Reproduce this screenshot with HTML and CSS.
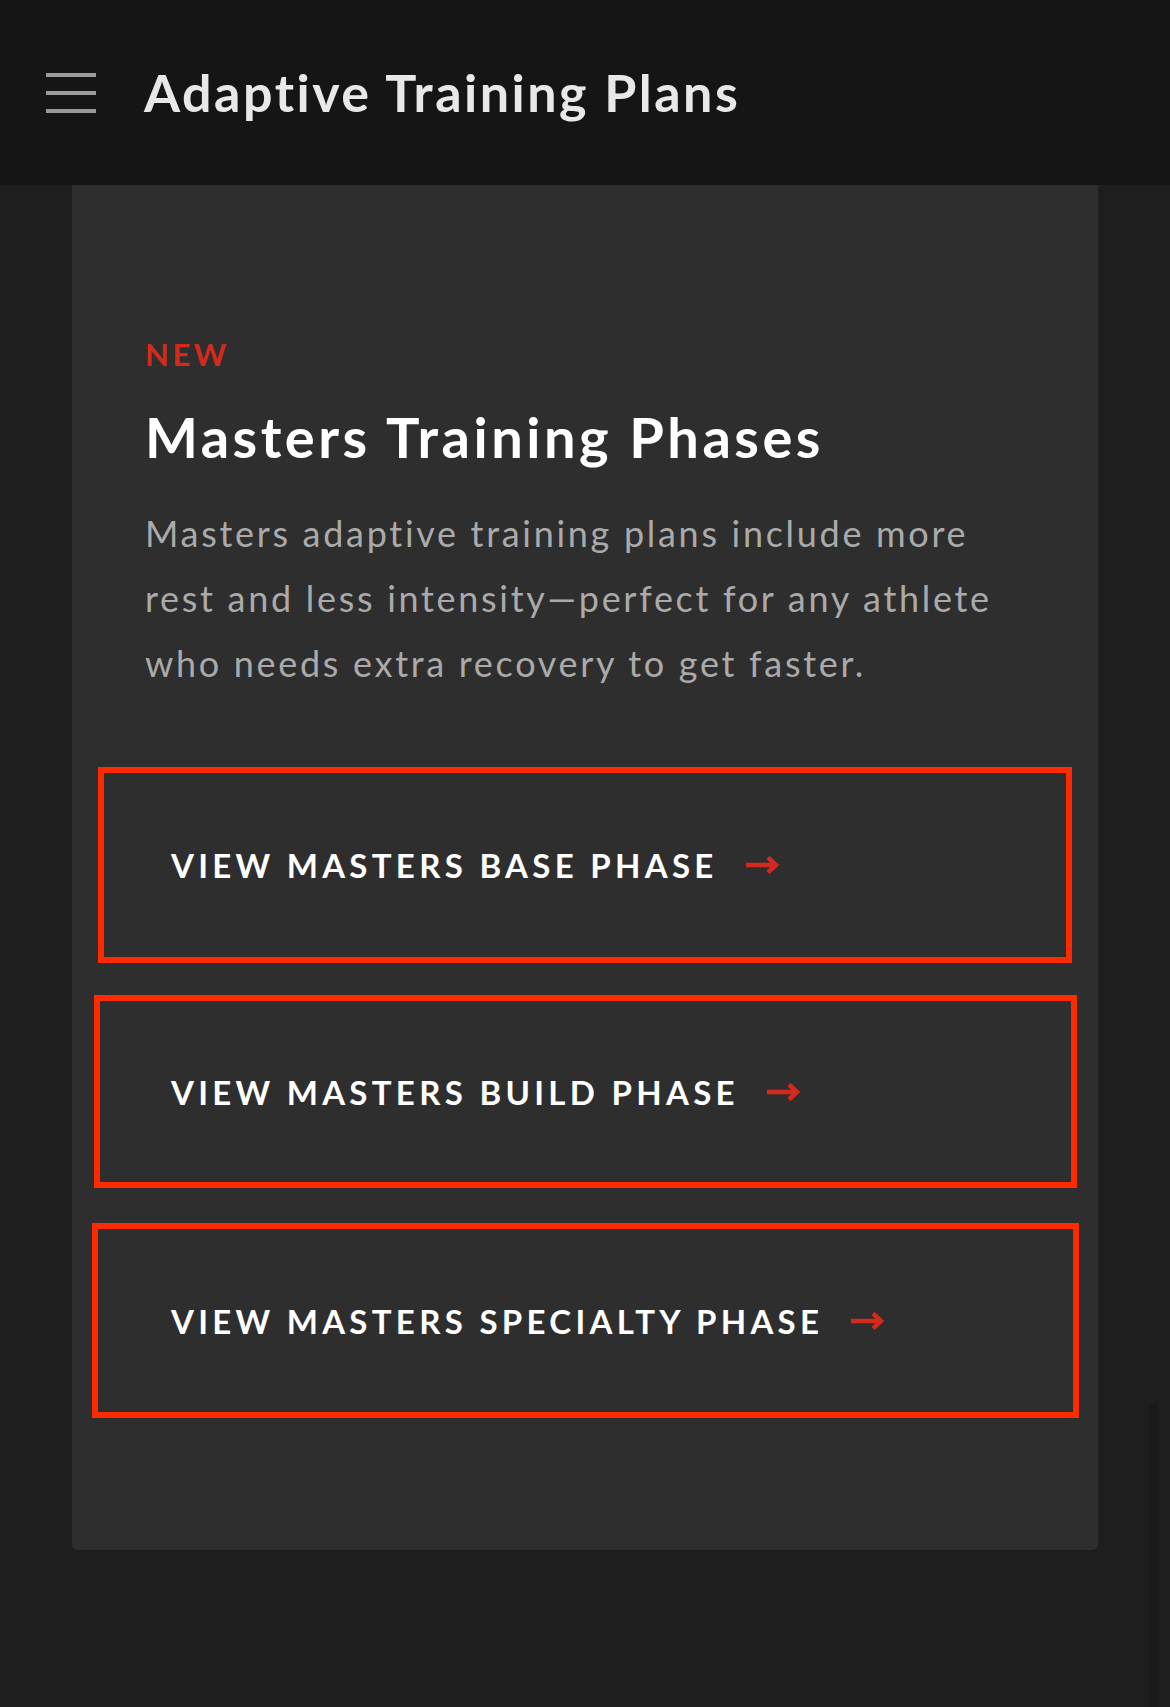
FILE: index.html
```html
<!DOCTYPE html>
<html lang="en">
<head>
  <meta charset="UTF-8">
  <title>Adaptive Training Plans</title>
  <link rel="stylesheet" href="styles.css">
</head>
<body>

<!--顶部导航-->
<header class="topbar">
  <a class="menu-btn" href="javascript:;">
    <span></span>
    <span></span>
    <span></span>
  </a>
  <h1 class="topbar-title">Adaptive Training Plans</h1>
</header>

<main class="page">
  <section class="card">
    <p class="tag">NEW</p>
    <h2 class="card-title">Masters Training Phases</h2>
    <p class="card-desc">Masters adaptive training plans include more rest and less intensity—perfect for any athlete who needs extra recovery to get faster.</p>

    <!--三个阶段的链接-->
    <div class="phase-list">
      <a class="phase-link phase-base" href="#">
        VIEW MASTERS BASE PHASE
        <svg class="arrow" width="33" height="18" viewBox="0 0 33 18"><path d="M0 9H30M22 1.5L30 9L22 16.5" fill="none" stroke="#d42a1e" stroke-width="4.5"/></svg>
      </a>
      <a class="phase-link phase-build" href="#">
        VIEW MASTERS BUILD PHASE
        <svg class="arrow" width="33" height="18" viewBox="0 0 33 18"><path d="M0 9H30M22 1.5L30 9L22 16.5" fill="none" stroke="#d42a1e" stroke-width="4.5"/></svg>
      </a>
      <a class="phase-link phase-specialty" href="#">
        VIEW MASTERS SPECIALTY PHASE
        <svg class="arrow" width="33" height="18" viewBox="0 0 33 18"><path d="M0 9H30M22 1.5L30 9L22 16.5" fill="none" stroke="#d42a1e" stroke-width="4.5"/></svg>
      </a>
    </div>
  </section>
</main>

<!--右侧滚动条-->
<div class="scroll-track"></div>

</body>
</html>
```
FILE: styles.css
```css
* {
  margin: 0;
  padding: 0;
  box-sizing: border-box;
}

body {
  background-color: #1e1e1e;
  font-family: Lato, "Open Sans", Arial, sans-serif;
  min-height: 1707px;
  position: relative;
}

/*顶部导航*/
.topbar {
  height: 185px;
  background-color: #151515;
  display: flex;
  align-items: center;
  padding-left: 46px;
}

.menu-btn {
  width: 50px;
  height: 40px;
  display: flex;
  flex-direction: column;
  justify-content: space-between;
  margin-right: 48px;
}

.menu-btn span {
  height: 4px;
  background-color: #9a9a9a;
}

.topbar-title {
  font-size: 52px;
  line-height: 1.2;
  font-weight: 700;
  letter-spacing: 2.5px;
  color: #e8e8e8;
}

/*卡片*/
.page {
  padding: 0 72px;
}

.card {
  background-color: #2e2e2e;
  border-radius: 0 0 6px 6px;
  padding: 149px 0 132px;
}

.tag {
  padding-left: 73px;
  font-size: 31px;
  line-height: 40px;
  font-weight: 700;
  letter-spacing: 3.5px;
  color: #d42a1e;
}

.card-title {
  padding-left: 73px;
  margin-top: 29px;
  font-size: 56px;
  line-height: 1.2;
  font-weight: 700;
  letter-spacing: 3.5px;
  color: #fff;
}

.card-desc {
  padding: 0 73px;
  margin-top: 31px;
  font-size: 36px;
  line-height: 65px;
  letter-spacing: 2.7px;
  color: #aaa;
}

/*阶段链接*/
.phase-list {
  margin-top: 71px;
  display: flex;
  flex-direction: column;
}

.phase-link {
  display: flex;
  align-items: center;
  gap: 28px;
  border: 6px solid #ff2a00;
  text-decoration: none;
  color: #fff;
  font-size: 33px;
  font-weight: 700;
  letter-spacing: 4.3px;
}

.phase-base {
  height: 196px;
  margin: 0 26px;
  padding-left: 67px;
}

.phase-build {
  height: 193px;
  margin: 32px 21px 0 22px;
  padding-left: 71px;
}

.phase-specialty {
  height: 195px;
  margin: 35px 19px 0 20px;
  padding-left: 73px;
}

.arrow {
  flex-shrink: 0;
}

.scroll-track {
  position: absolute;
  top: 1403px;
  bottom: 0;
  right: 12px;
  width: 9px;
  background-color: #1a1a1a;
  border-radius: 4px 4px 0 0;
}
```
